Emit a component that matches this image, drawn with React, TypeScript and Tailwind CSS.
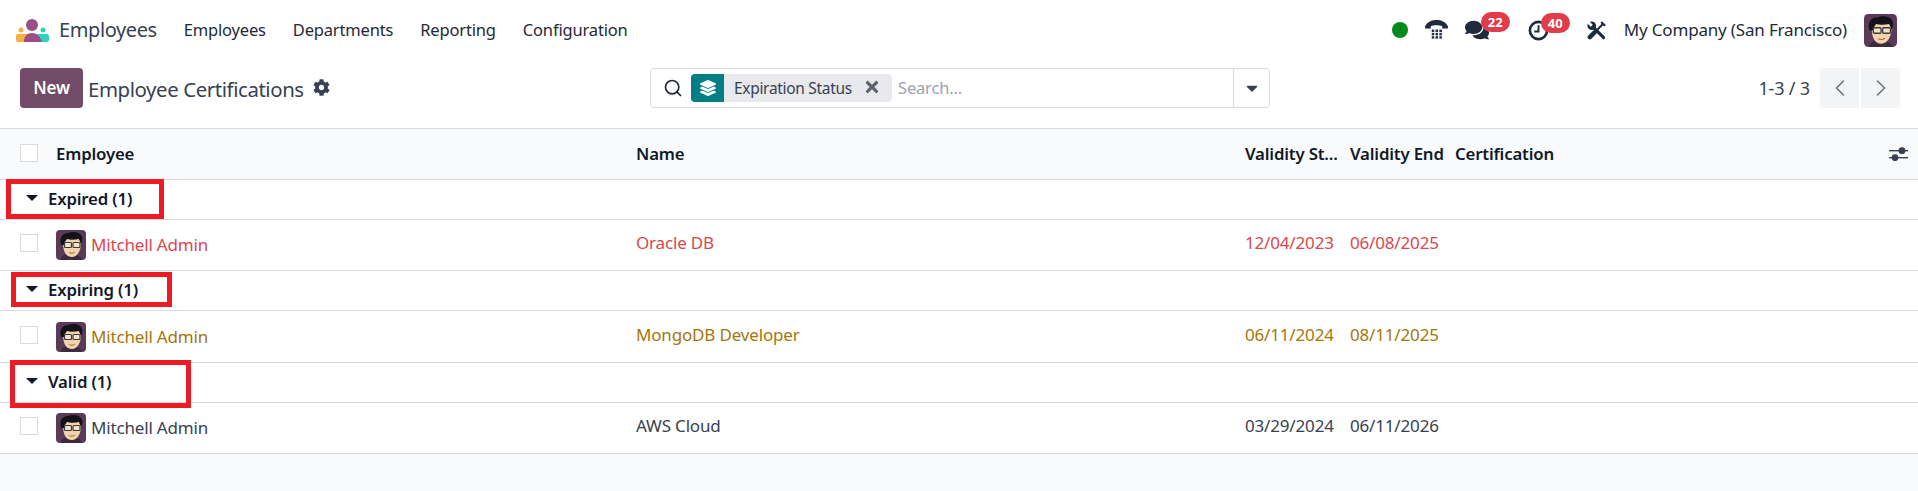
import React from "react";
import { FaComments, FaCog, FaTimes, FaLayerGroup, FaCaretDown } from "react-icons/fa";
import { Search, ChevronLeft, ChevronRight } from "lucide-react";

function Avatar({ size }: { size: string }) {
  return (
    <svg viewBox="0 0 30 30" className={size + " shrink-0"}>
      <rect width="30" height="30" rx="4" fill="#5b3a57" />
      <path d="M5 30c0-4 3-6 9-6s11 2 12 6z" fill="#3d2a3c" />
      <path d="M7 12c0 10 3 15 9 15 5 0 9-6 9-14l-2-4H10z" fill="#f3d3ac" />
      <path d="M5 15C3 8 6 3 12 3c5-2 13-1 14 4 1 2 0 6-1 7l-2-5c-4 1-9 1-12 0-1 2-3 3-3 6z" fill="#15131a" />
      <rect x="8.5" y="12.5" width="7" height="5" rx="1" fill="#efe3cf" stroke="#3b3b3b" strokeWidth="1.2" />
      <rect x="17" y="12.5" width="7" height="5" rx="1" fill="#efe3cf" stroke="#3b3b3b" strokeWidth="1.2" />
      <path d="M13 22.5c2 1 4 1 6-.5" stroke="#a3684a" strokeWidth="1" fill="none" />
    </svg>
  );
}

function Logo() {
  return (
    <svg viewBox="0 0 33 23" className="w-[33px] h-[23px]">
      <rect x="0" y="15" width="16" height="8" rx="2" fill="#f5b041" />
      <rect x="20" y="15" width="13" height="8" rx="2.5" fill="#2ed3bf" />
      <circle cx="5" cy="11" r="2.5" fill="#f5b041" />
      <circle cx="27" cy="11" r="2.5" fill="#2ed3bf" />
      <path d="M8 23c0-6 3-9 8-9s8 3 10 9z" fill="#9a4f86" />
      <circle cx="16" cy="6" r="6" fill="#9a4f86" />
    </svg>
  );
}

function Phone() {
  return (
    <svg viewBox="0 0 24 21" className="w-[23px] h-5" fill="#1f2a3d">
      <path d="M0 6.5C3 1 8 0 12 0s9 1 12 6.5V9h-6V6.5c-3-1.4-9-1.4-12 0V9H0z" />
      {[7, 11, 15].map((x) =>
        [10, 13.5, 17].map((y) => <rect key={x + "-" + y} x={x} y={y} width="2.6" height="2.6" />)
      )}
    </svg>
  );
}

function Clock() {
  return (
    <svg viewBox="0 0 22 22" className="w-[21px] h-[21px]" fill="none" stroke="#1f2a3d">
      <circle cx="11" cy="11" r="9" strokeWidth="2.8" />
      <path d="M11 5.5V12H6.5" strokeWidth="2" />
    </svg>
  );
}

function Tools() {
  return (
    <svg viewBox="0 0 20 20" className="w-[19px] h-[19px]" fill="none" stroke="#1f2a3d">
      <path d="M7 7l10.5 10.5" strokeWidth="3.2" strokeLinecap="round" />
      <circle cx="5" cy="5" r="4.6" fill="#1f2a3d" stroke="none" />
      <path d="M0 0l5 5" stroke="#ffffff" strokeWidth="3" />
      <path d="M16.5 3.5L10 10" strokeWidth="2.2" />
      <path d="M15 1l4 4" strokeWidth="2.4" />
      <path d="M8 12L3 17" strokeWidth="4.6" strokeLinecap="round" />
    </svg>
  );
}

function Sliders() {
  return (
    <svg viewBox="0 0 19 14" className="w-[19px] h-[14px]" fill="#374151">
      <rect x="0" y="3" width="19" height="1.4" />
      <rect x="0" y="10" width="19" height="1.4" />
      <circle cx="13" cy="3.7" r="3.4" />
      <circle cx="6" cy="10.7" r="3.4" />
    </svg>
  );
}

function Caret() {
  return (
    <svg viewBox="0 0 12 6" className="w-3 h-[6px] mb-1">
      <path d="M0 0h12L6 6z" fill="#111827" />
    </svg>
  );
}

function Check() {
  return <span className="block w-[18px] h-[18px] border border-[#d8dadd] bg-white" />;
}

const ROW = "grid grid-cols-[56px_580px_609px_105px_105px_1fr] items-center";

function Badge({ n, left }: { n: number; left: string }) {
  return (
    <span className={"absolute top-[-7px] w-[29px] h-5 rounded-full bg-[#e03c4c] text-white text-[13px] font-bold leading-5 text-center tracking-normal " + left}>
      {n}
    </span>
  );
}

function Group({ label }: { label: string }) {
  return (
    <div className="h-10 flex items-center border-b border-[#d8dadd] bg-white pl-[26px]">
      <Caret />
      <span className="ml-[10px] mb-[2px] text-[16.8px] font-semibold text-[#111827]">{label}</span>
    </div>
  );
}

function Row({ color, name, start, end, h }: { color: string; name: string; start: string; end: string; h: string }) {
  return (
    <div className={ROW + " border-b border-[#d8dadd] bg-white " + h + " " + color}>
      <div className="pl-5 mb-1"><Check /></div>
      <div className="flex items-center gap-[5px]">
        <Avatar size="w-[30px] h-[30px]" />
        <span>Mitchell Admin</span>
      </div>
      <div className="mb-1">{name}</div>
      <div className="mb-1">{start}</div>
      <div className="mb-1">{end}</div>
      <div />
    </div>
  );
}

export default function App() {
  return (
    <div className="relative min-h-[491px] bg-[#f9fafb] text-[17px] text-[#374151] font-['Noto_Sans','Open_Sans',sans-serif] tracking-[-0.01em] overflow-hidden">
      <nav className="h-[60px] bg-white flex items-center pl-4 pr-[21px] text-[#1f2937]">
        <Logo />
        <span className="ml-[10px] text-[20px] tracking-[-0.02em] text-[#374151]">Employees</span>
        <div className="ml-[27px] flex gap-[27px] text-[16.5px]">
          <span>Employees</span>
          <span>Departments</span>
          <span>Reporting</span>
          <span>Configuration</span>
        </div>
        <div className="ml-auto flex items-center">
          <span className="w-4 h-4 rounded-full bg-[#008a1e]" />
          <span className="ml-[17px]"><Phone /></span>
          <span className="relative ml-[17px]">
            <FaComments className="w-[24px] h-[22px] text-[#1f2a3d]" />
            <Badge n={22} left="left-[16px]" />
          </span>
          <span className="relative ml-[39px] mr-[38px]">
            <Clock />
            <Badge n={40} left="left-[13px]" />
          </span>
          <Tools />
          <span className="ml-[18px]">My Company (San Francisco)</span>
          <span className="ml-[17px]"><Avatar size="w-[33px] h-[33px]" /></span>
        </div>
      </nav>
      <div className="h-[69px] bg-white border-b border-[#d8dadd] grid grid-cols-[630px_620px_1fr] pl-5 pr-[18px] pt-2">
        <div className="flex items-start">
          <button className="w-[63px] h-10 rounded bg-[#714b67] text-white font-semibold">New</button>
          <span className="ml-[5px] mt-[6px] text-[20.4px] tracking-[-0.02em] text-[#374151]">Employee Certifications</span>
          <FaCog className="ml-[9px] mt-[11px] w-[17px] h-[17px] text-[#374151]" />
        </div>
        <div className="h-10 border border-[#d8dadd] rounded flex items-center bg-white">
          <Search className="ml-3 w-5 h-5 text-[#1f2937]" strokeWidth={2} />
          <div className="ml-2 h-[28px] w-[201px] flex rounded bg-[#e7e9ed] overflow-hidden">
            <span className="w-[33px] bg-[#017e84] flex items-center justify-center">
              <FaLayerGroup className="w-4 h-4 text-white" />
            </span>
            <span className="ml-[10px] text-[15.5px] tracking-[-0.02em] leading-[28px] text-[#374151]">Expiration Status</span>
            <FaTimes className="ml-auto mr-[11px] mt-[4px] w-[18px] h-[18px] text-[#5f636f]" />
          </div>
          <span className="ml-[6px] text-[16.5px] text-[#9ca3af]">Search...</span>
          <span className="ml-auto w-9 h-full border-l border-[#d8dadd] flex items-center justify-center">
            <FaCaretDown className="w-[18px] h-[18px] text-[#374151]" />
          </span>
        </div>
        <div className="flex justify-end items-start">
          <span className="mr-[10px] mt-[7px] text-[18px]">1-3 / 3</span>
          <span className="w-[39px] h-10 rounded-l bg-[#f3f4f6] flex items-center justify-center">
            <ChevronLeft className="w-7 h-7 text-[#6b7280]" strokeWidth={1.3} />
          </span>
          <span className="ml-[2px] w-[39px] h-10 rounded-r bg-[#f3f4f6] flex items-center justify-center">
            <ChevronRight className="w-7 h-7 text-[#6b7280]" strokeWidth={1.3} />
          </span>
        </div>
      </div>
      <div className="relative">
        <div className={ROW + " relative h-[51px] border-b border-[#d8dadd] text-[16.8px] font-semibold text-[#111827]"}>
          <div className="pl-5 mb-[2px]"><Check /></div>
          <div>Employee</div>
          <div>Name</div>
          <div>Validity St...</div>
          <div>Validity End</div>
          <div>Certification</div>
          <span className="absolute right-[10px] top-[18px]"><Sliders /></span>
        </div>
        <Group label="Expired (1)" />
        <Row h="h-[51px]" color="text-[#d8484f]" name="Oracle DB" start="12/04/2023" end="06/08/2025" />
        <Group label="Expiring (1)" />
        <Row h="h-[52px]" color="text-[#a5760a]" name="MongoDB Developer" start="06/11/2024" end="08/11/2025" />
        <Group label="Valid (1)" />
        <Row h="h-[51px]" color="text-[#374151]" name="AWS Cloud" start="03/29/2024" end="06/11/2026" />
        <span className="absolute left-[6px] top-[50px] w-[158px] h-[40px] border-[5px] border-[#ed1c24]" />
        <span className="absolute left-[11px] top-[143px] w-[161px] h-[35px] border-[5px] border-[#ed1c24]" />
        <span className="absolute left-[10px] top-[231px] w-[181px] h-[48px] border-[5px] border-[#ed1c24]" />
      </div>
    </div>
  );
}
